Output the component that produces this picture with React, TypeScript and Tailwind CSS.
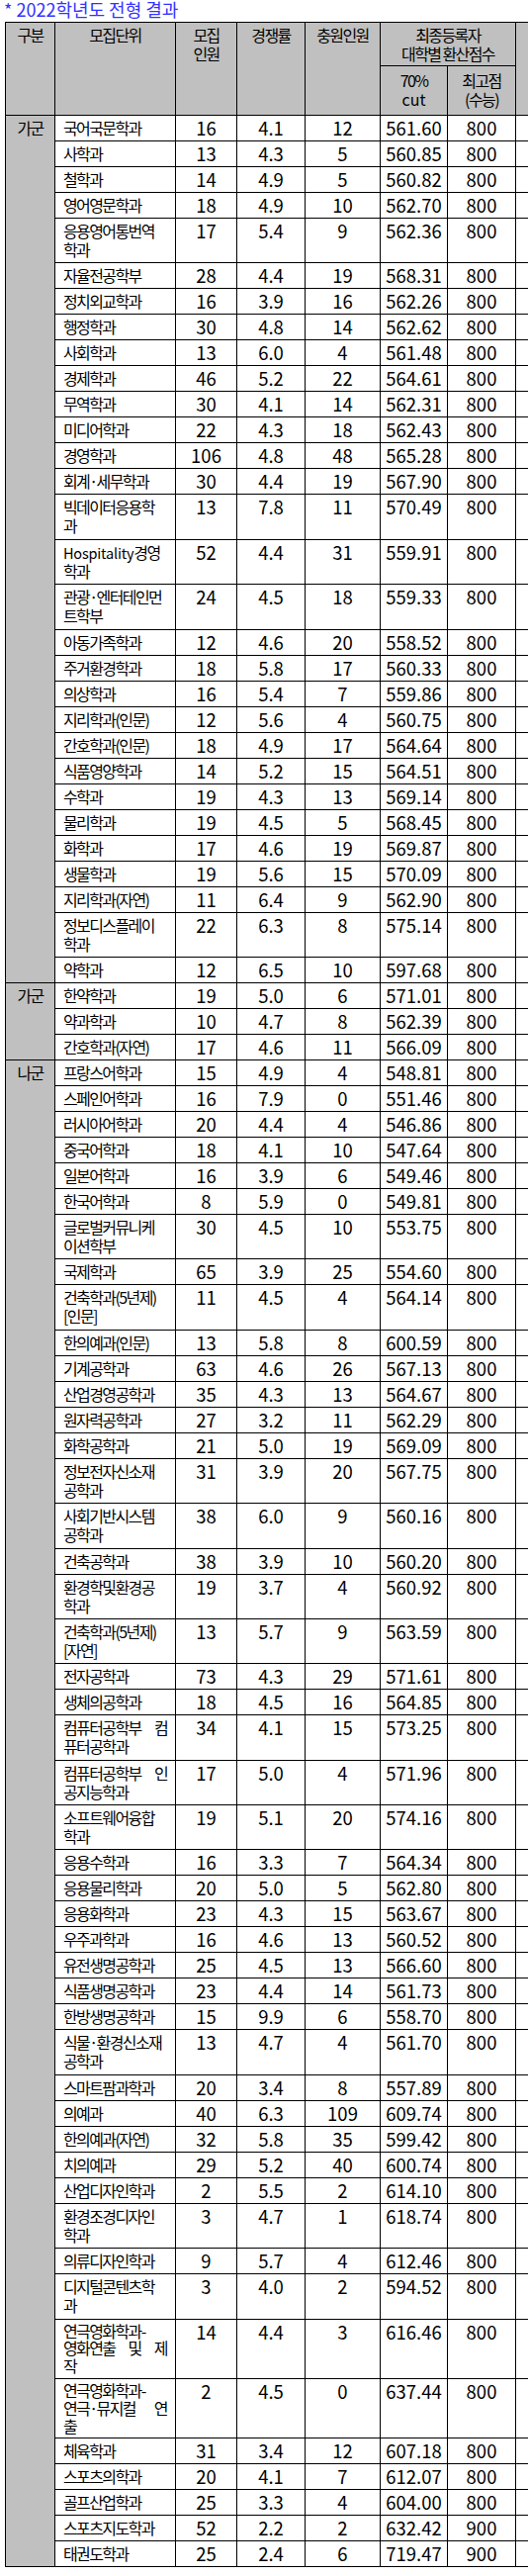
import React from "react";

type R = [string, string, string, string, string, string];

const g1: R[] = [
  ["국어국문학과", "16", "4.1", "12", "561.60", "800"],
  ["사학과", "13", "4.3", "5", "560.85", "800"],
  ["철학과", "14", "4.9", "5", "560.82", "800"],
  ["영어영문학과", "18", "4.9", "10", "562.70", "800"],
  ["응용영어통번역|학과", "17", "5.4", "9", "562.36", "800"],
  ["자율전공학부", "28", "4.4", "19", "568.31", "800"],
  ["정치외교학과", "16", "3.9", "16", "562.26", "800"],
  ["행정학과", "30", "4.8", "14", "562.62", "800"],
  ["사회학과", "13", "6.0", "4", "561.48", "800"],
  ["경제학과", "46", "5.2", "22", "564.61", "800"],
  ["무역학과", "30", "4.1", "14", "562.31", "800"],
  ["미디어학과", "22", "4.3", "18", "562.43", "800"],
  ["경영학과", "106", "4.8", "48", "565.28", "800"],
  ["회계·세무학과", "30", "4.4", "19", "567.90", "800"],
  ["빅데이터응용학|과", "13", "7.8", "11", "570.49", "800"],
  ["Hospitality경영|학과", "52", "4.4", "31", "559.91", "800"],
  ["관광·엔터테인먼|트학부", "24", "4.5", "18", "559.33", "800"],
  ["아동가족학과", "12", "4.6", "20", "558.52", "800"],
  ["주거환경학과", "18", "5.8", "17", "560.33", "800"],
  ["의상학과", "16", "5.4", "7", "559.86", "800"],
  ["지리학과(인문)", "12", "5.6", "4", "560.75", "800"],
  ["간호학과(인문)", "18", "4.9", "17", "564.64", "800"],
  ["식품영양학과", "14", "5.2", "15", "564.51", "800"],
  ["수학과", "19", "4.3", "13", "569.14", "800"],
  ["물리학과", "19", "4.5", "5", "568.45", "800"],
  ["화학과", "17", "4.6", "19", "569.87", "800"],
  ["생물학과", "19", "5.6", "15", "570.09", "800"],
  ["지리학과(자연)", "11", "6.4", "9", "562.90", "800"],
  ["정보디스플레이|학과", "22", "6.3", "8", "575.14", "800"],
  ["약학과", "12", "6.5", "10", "597.68", "800"],
];

const g2: R[] = [
  ["한약학과", "19", "5.0", "6", "571.01", "800"],
  ["약과학과", "10", "4.7", "8", "562.39", "800"],
  ["간호학과(자연)", "17", "4.6", "11", "566.09", "800"],
];

const g3: R[] = [
  ["프랑스어학과", "15", "4.9", "4", "548.81", "800"],
  ["스페인어학과", "16", "7.9", "0", "551.46", "800"],
  ["러시아어학과", "20", "4.4", "4", "546.86", "800"],
  ["중국어학과", "18", "4.1", "10", "547.64", "800"],
  ["일본어학과", "16", "3.9", "6", "549.46", "800"],
  ["한국어학과", "8", "5.9", "0", "549.81", "800"],
  ["글로벌커뮤니케|이션학부", "30", "4.5", "10", "553.75", "800"],
  ["국제학과", "65", "3.9", "25", "554.60", "800"],
  ["건축학과(5년제)|[인문]", "11", "4.5", "4", "564.14", "800"],
  ["한의예과(인문)", "13", "5.8", "8", "600.59", "800"],
  ["기계공학과", "63", "4.6", "26", "567.13", "800"],
  ["산업경영공학과", "35", "4.3", "13", "564.67", "800"],
  ["원자력공학과", "27", "3.2", "11", "562.29", "800"],
  ["화학공학과", "21", "5.0", "19", "569.09", "800"],
  ["정보전자신소재|공학과", "31", "3.9", "20", "567.75", "800"],
  ["사회기반시스템|공학과", "38", "6.0", "9", "560.16", "800"],
  ["건축공학과", "38", "3.9", "10", "560.20", "800"],
  ["환경학및환경공|학과", "19", "3.7", "4", "560.92", "800"],
  ["건축학과(5년제)|[자연]", "13", "5.7", "9", "563.59", "800"],
  ["전자공학과", "73", "4.3", "29", "571.61", "800"],
  ["생체의공학과", "18", "4.5", "16", "564.85", "800"],
  ["컴퓨터공학부 컴|퓨터공학과", "34", "4.1", "15", "573.25", "800"],
  ["컴퓨터공학부 인|공지능학과", "17", "5.0", "4", "571.96", "800"],
  ["소프트웨어융합|학과", "19", "5.1", "20", "574.16", "800"],
  ["응용수학과", "16", "3.3", "7", "564.34", "800"],
  ["응용물리학과", "20", "5.0", "5", "562.80", "800"],
  ["응용화학과", "23", "4.3", "15", "563.67", "800"],
  ["우주과학과", "16", "4.6", "13", "560.52", "800"],
  ["유전생명공학과", "25", "4.5", "13", "566.60", "800"],
  ["식품생명공학과", "23", "4.4", "14", "561.73", "800"],
  ["한방생명공학과", "15", "9.9", "6", "558.70", "800"],
  ["식물·환경신소재|공학과", "13", "4.7", "4", "561.70", "800"],
  ["스마트팜과학과", "20", "3.4", "8", "557.89", "800"],
  ["의예과", "40", "6.3", "109", "609.74", "800"],
  ["한의예과(자연)", "32", "5.8", "35", "599.42", "800"],
  ["치의예과", "29", "5.2", "40", "600.74", "800"],
  ["산업디자인학과", "2", "5.5", "2", "614.10", "800"],
  ["환경조경디자인|학과", "3", "4.7", "1", "618.74", "800"],
  ["의류디자인학과", "9", "5.7", "4", "612.46", "800"],
  ["디지털콘텐츠학|과", "3", "4.0", "2", "594.52", "800"],
  ["연극영화학과-|영화연출 및 제|작", "14", "4.4", "3", "616.46", "800"],
  ["연극영화학과-|연극·뮤지컬 연|출", "2", "4.5", "0", "637.44", "800"],
  ["체육학과", "31", "3.4", "12", "607.18", "800"],
  ["스포츠의학과", "20", "4.1", "7", "612.07", "800"],
  ["골프산업학과", "25", "3.3", "4", "604.00", "800"],
  ["스포츠지도학과", "52", "2.2", "2", "632.42", "900"],
  ["태권도학과", "25", "2.4", "6", "719.47", "900"],
];

const groups: { label: string; rows: R[] }[] = [
  { label: "가군", rows: g1 },
  { label: "가군", rows: g2 },
  { label: "나군", rows: g3 },
];

function Line({ text }: { text: string }) {
  if (text.startsWith("Hospitality")) {
    return (
      <>
        <span className="text-[14.5px] tracking-[-0.2px]">Hospitality</span>
        {text.slice(11)}
      </>
    );
  }
  return <>{text}</>;
}

function Name({ text }: { text: string }) {
  const lines = text.split("|");
  return (
    <>
      {lines.map((l, i) => {
        const justify = i < lines.length - 1 && l.includes(" ");
        return (
          <div key={i} className={justify ? "text-justify [text-align-last:justify]" : "whitespace-nowrap"}>
            <Line text={l} />
          </div>
        );
      })}
    </>
  );
}

const td = "border border-black align-top";
const num = "border border-black align-top text-center text-[18.5px] leading-[19px] pt-[3px] pb-[3px] tracking-normal";

export default function App() {
  return (
    <div className="w-[534px] overflow-hidden bg-white text-black font-['Noto_Sans_CJK_KR',sans-serif]">
      <div className="h-[22px] pl-[4px] text-[18px] leading-[19px] text-[#3333ff] whitespace-nowrap">
        * 2022학년도 전형 결과
      </div>
      <table className="ml-[5px] border-collapse table-fixed w-[586px] text-[16px] leading-[19px] tracking-[-1.6px]">
        <colgroup>
          <col className="w-[50px]" />
          <col className="w-[122px]" />
          <col className="w-[62px]" />
          <col className="w-[69px]" />
          <col className="w-[76px]" />
          <col className="w-[68px]" />
          <col className="w-[69px]" />
          <col className="w-[70px]" />
        </colgroup>
        <thead>
          <tr>
            <th rowSpan={2} className="border border-black bg-[#c0c0c0] font-normal align-top pt-[3px] text-center">
              구분
            </th>
            <th rowSpan={2} className="border border-black bg-[#c0c0c0] font-normal align-top pt-[3px] text-center">
              모집단위
            </th>
            <th rowSpan={2} className="border border-black bg-[#c0c0c0] font-normal align-top pt-[3px] text-center">
              <div>모집</div>
              <div>인원</div>
            </th>
            <th rowSpan={2} className="border border-black bg-[#c0c0c0] font-normal align-top pt-[3px] text-center">
              경쟁률
            </th>
            <th rowSpan={2} className="border border-black bg-[#c0c0c0] font-normal align-top pt-[3px] text-center">
              충원인원
            </th>
            <th colSpan={2} className="border border-black bg-[#c0c0c0] font-normal align-top pt-[3px] pb-[2px] text-center">
              <div>최종등록자</div>
              <div>대학별 환산점수</div>
            </th>
            <th rowSpan={2} className="border border-black bg-[#c0c0c0] font-normal align-top p-0"></th>
          </tr>
          <tr>
            <th className="border border-black bg-[#c0c0c0] font-normal align-middle pt-[5px] pb-[6px] text-center">
              <div>70%</div>
              <div className="tracking-normal">cut</div>
            </th>
            <th className="border border-black bg-[#c0c0c0] font-normal align-middle pt-[5px] pb-[6px] text-center">
              <div>최고점</div>
              <div>(수능)</div>
            </th>
          </tr>
        </thead>
        <tbody>
          {groups.map((g, gi) =>
            g.rows.map((r, ri) => {
              const n = r[0].split("|").length;
              const nameCls =
                n === 1
                  ? "pt-[3px] pb-[3px] leading-[19px]"
                  : n === 2
                  ? "pt-[3px] pb-[3.4px] leading-[19px]"
                  : "pt-[3px] pb-[3px] leading-[17.8px]";
              return (
                <tr key={`${gi}-${ri}`}>
                  {ri === 0 && (
                    <td rowSpan={g.rows.length} className={`${td} bg-[#c0c0c0] text-center pt-[3px]`}>
                      {g.label}
                    </td>
                  )}
                  <td className={`${td} pl-[8px] pr-[8px] text-left ${nameCls}`}>
                    <Name text={r[0]} />
                  </td>
                  <td className={num}>{r[1]}</td>
                  <td className={num}>{r[2]}</td>
                  <td className={num}>{r[3]}</td>
                  <td className={`${num} tracking-[-2px]`}>{r[4]}</td>
                  <td className={num}>{r[5]}</td>
                  <td className={td}></td>
                </tr>
              );
            })
          )}
        </tbody>
      </table>
    </div>
  );
}
